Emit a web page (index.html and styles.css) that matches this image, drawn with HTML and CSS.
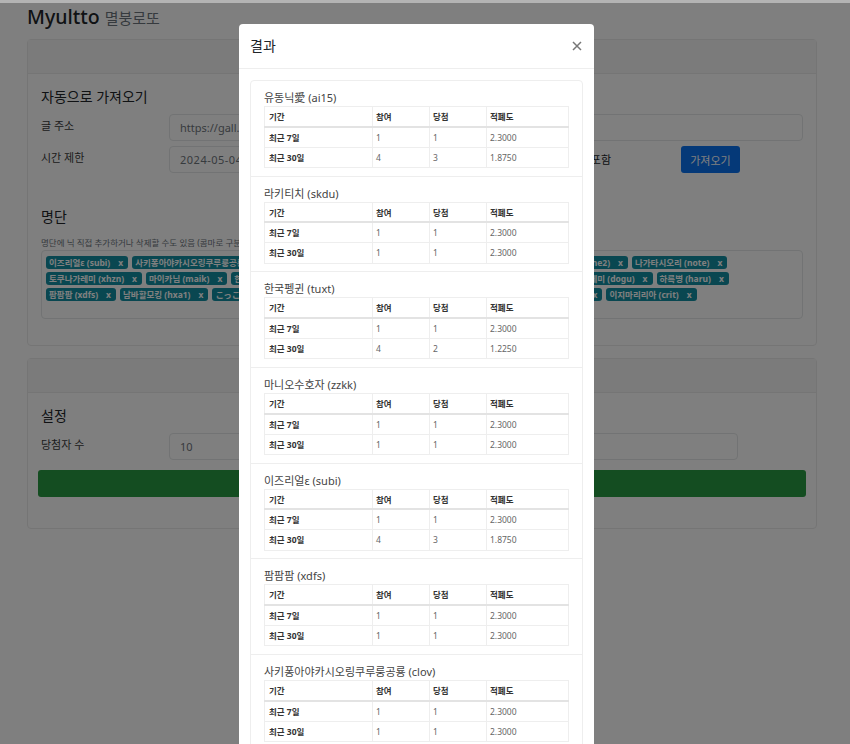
FILE: index.html
```html
<!DOCTYPE html>
<html lang="ko">
<head>
  <meta charset="UTF-8">
  <title>Myultto</title>
  <link rel="stylesheet" href="styles.css">
</head>
<body>
  <div class="page">
    <h1 class="title">Myultto <small>멸붕로또</small></h1>

    <section class="card">
      <div class="card-header"></div>
      <div class="card-body">
        <h5>자동으로 가져오기</h5>
        <div class="form-row">
          <label class="form-label">글 주소</label>
          <input class="form-control" value="https://gall.dcinside.com/mgallery/board/view/?id=pumpitup">
        </div>
        <div class="form-row">
          <label class="form-label">시간 제한</label>
          <input class="form-control date-input" value="2024-05-04">
          <span class="check-label">댓글 포함</span>
          <button class="btn btn-primary">가져오기</button>
        </div>

        <h5 class="list-title">명단</h5>
        <p class="help-text">명단에 닉 직접 추가하거나 삭제할 수도 있음 (콤마로 구분)</p>
        <div class="tag-box">
          <div class="tag-row">
            <span class="tag">이즈리얼ε (subi)<i>x</i></span>
            <span class="tag">사키퐁아야카시오링쿠루룽공룡 (clov)<i>x</i></span>
            <span class="tag">유동닉愛 (ai15)<i>x</i></span>
            <span class="tag">라키티치 (skdu)<i>x</i></span>
            <span class="tag">한국펭귄 (tuxt)<i>x</i></span>
            <span class="tag">마니오수호 (zhe2)<i>x</i></span>
            <span class="tag">나가타시오리 (note)<i>x</i></span>
          </div>
          <div class="tag-row">
            <span class="tag">토쿠나가레미 (xhzn)<i>x</i></span>
            <span class="tag">마이카님 (maik)<i>x</i></span>
            <span class="tag">한국펭귄 (tuxt)<i>x</i></span>
            <span class="tag">마니오수호자 (zzkk)<i>x</i></span>
            <span class="tag">라키티치 (skdu)<i>x</i></span>
            <span class="tag">팜팜팜 (xdfs)<i>x</i></span>
            <span class="tag">도구레미 (dogu)<i>x</i></span>
            <span class="tag">하륵병 (haru)<i>x</i></span>
          </div>
          <div class="tag-row">
            <span class="tag">팜팜팜 (xdfs)<i>x</i></span>
            <span class="tag">남바할모킹 (hxa1)<i>x</i></span>
            <span class="tag">こっこ (kkoo)<i>x</i></span>
            <span class="tag">치즈케이크 (chee)<i>x</i></span>
            <span class="tag">유동닉愛 (ai15)<i>x</i></span>
            <span class="tag">이즈리얼ε (subi)<i>x</i></span>
            <span class="tag">こっ (k)<i>x</i></span>
            <span class="tag">이지마리리아 (crit)<i>x</i></span>
          </div>
        </div>
      </div>
    </section>

    <section class="card">
      <div class="card-header"></div>
      <div class="card-body settings-body">
        <h5>설정</h5>
        <div class="form-row count-row">
          <label class="form-label">당첨자 수</label>
          <input class="form-control" value="10">
        </div>
        <button class="btn btn-success"></button>
      </div>
    </section>
  </div>

  <!-- 결과 모달 -->
  <div class="modal">
    <div class="modal-dialog">
      <div class="modal-header">
        <span class="modal-title">결과</span>
        <svg class="modal-close" width="10" height="10" viewBox="0 0 10 10"><path d="M1 1l8 8M9 1l-8 8"/></svg>
      </div>
      <div class="modal-body">
        <div class="result-list">
          <div class="result-item">
            <div class="result-name">유동닉愛 (ai15)</div>
            <table>
              <tr><th>기간</th><th>참여</th><th>당첨</th><th>적폐도</th></tr>
              <tr><th>최근 7일</th><td>1</td><td>1</td><td>2.3000</td></tr>
              <tr><th>최근 30일</th><td>4</td><td>3</td><td>1.8750</td></tr>
            </table>
          </div>
          <div class="result-item">
            <div class="result-name">라키티치 (skdu)</div>
            <table>
              <tr><th>기간</th><th>참여</th><th>당첨</th><th>적폐도</th></tr>
              <tr><th>최근 7일</th><td>1</td><td>1</td><td>2.3000</td></tr>
              <tr><th>최근 30일</th><td>1</td><td>1</td><td>2.3000</td></tr>
            </table>
          </div>
          <div class="result-item">
            <div class="result-name">한국펭귄 (tuxt)</div>
            <table>
              <tr><th>기간</th><th>참여</th><th>당첨</th><th>적폐도</th></tr>
              <tr><th>최근 7일</th><td>1</td><td>1</td><td>2.3000</td></tr>
              <tr><th>최근 30일</th><td>4</td><td>2</td><td>1.2250</td></tr>
            </table>
          </div>
          <div class="result-item">
            <div class="result-name">마니오수호자 (zzkk)</div>
            <table>
              <tr><th>기간</th><th>참여</th><th>당첨</th><th>적폐도</th></tr>
              <tr><th>최근 7일</th><td>1</td><td>1</td><td>2.3000</td></tr>
              <tr><th>최근 30일</th><td>1</td><td>1</td><td>2.3000</td></tr>
            </table>
          </div>
          <div class="result-item">
            <div class="result-name">이즈리얼ε (subi)</div>
            <table>
              <tr><th>기간</th><th>참여</th><th>당첨</th><th>적폐도</th></tr>
              <tr><th>최근 7일</th><td>1</td><td>1</td><td>2.3000</td></tr>
              <tr><th>최근 30일</th><td>4</td><td>3</td><td>1.8750</td></tr>
            </table>
          </div>
          <div class="result-item">
            <div class="result-name">팜팜팜 (xdfs)</div>
            <table>
              <tr><th>기간</th><th>참여</th><th>당첨</th><th>적폐도</th></tr>
              <tr><th>최근 7일</th><td>1</td><td>1</td><td>2.3000</td></tr>
              <tr><th>최근 30일</th><td>1</td><td>1</td><td>2.3000</td></tr>
            </table>
          </div>
          <div class="result-item">
            <div class="result-name">사키퐁아야카시오링쿠루룽공룡 (clov)</div>
            <table>
              <tr><th>기간</th><th>참여</th><th>당첨</th><th>적폐도</th></tr>
              <tr><th>최근 7일</th><td>1</td><td>1</td><td>2.3000</td></tr>
              <tr><th>최근 30일</th><td>1</td><td>1</td><td>2.3000</td></tr>
            </table>
          </div>
        </div>
      </div>
    </div>
  </div>
</body>
</html>
```

FILE: styles.css
```css
* {
  box-sizing: border-box;
}

html,
body {
  height: 100%;
}

body {
  margin: 0;
  overflow: hidden;
  background-color: #fff;
  color: #212529;
  font-family: "Noto Sans", "Noto Sans CJK KR", sans-serif;
  font-size: 11px;
  line-height: 1.4;
}

.page {
  padding: 0 33px 0 27px;
}

.title {
  margin: 0;
  height: 39px;
  padding-top: 3px;
  font-size: 19.5px;
  font-weight: 500;
  line-height: 28px;
}

.title small {
  color: #6c757d;
  font-size: 15px;
  font-weight: 400;
}

/* 카드 */
.card {
  margin-bottom: 12px;
  border: 1px solid #eaeaea;
  border-radius: 4px;
}

.card-header {
  height: 34px;
  border-bottom: 1px solid #eaeaea;
  background-color: #f7f7f7;
}

.card-body {
  padding: 13px 13px 26px;
}

.settings-body {
  padding-bottom: 31px;
}

h5 {
  margin: 0 0 7px;
  font-size: 14px;
  font-weight: 400;
  line-height: 20px;
}

.form-row {
  display: flex;
  align-items: flex-start;
  height: 27px;
  margin-bottom: 5px;
}

.form-label {
  flex: 0 0 128px;
  color: #3a3a3a;
  line-height: 23px;
}

.form-control {
  flex: 1;
  min-width: 0;
  height: 27px;
  padding: 0 10px;
  border: 1px solid #e4e6e8;
  border-radius: 4px;
  background-color: #fff;
  color: #6f767d;
  font-family: inherit;
  font-size: 11px;
}

.date-input {
  flex: 0 0 280px;
  letter-spacing: 0.5px;
}

.check-label {
  flex: 0 0 162px;
  line-height: 27px;
  text-align: right;
}

.btn {
  border: 0;
  border-radius: 3px;
  font-family: inherit;
  font-size: 11px;
}

.btn-primary {
  width: 59px;
  height: 27px;
  margin-left: 70px;
  background-color: #0a72f0;
  color: #fff;
}

.btn-success {
  display: block;
  width: 768px;
  height: 27px;
  margin: 10px 0 0 -3px;
  background-color: #289a42;
}

.list-title {
  margin: 34px 0 10px;
}

.help-text {
  margin: 0;
  height: 13px;
  color: #6c757d;
  font-size: 8.5px;
  line-height: 12px;
  white-space: nowrap;
  overflow: hidden;
}

/* 명단 태그 */
.tag-box {
  height: 69px;
  padding: 5px 4px;
  border: 1px solid #e4e6e8;
  border-radius: 4px;
}

.tag-row {
  display: flex;
  gap: 4px;
  margin-bottom: 3px;
}

.tag {
  height: 13px;
  padding: 0 5px 0 3px;
  border-radius: 3px;
  background-color: #128fa3;
  color: #fff;
  font-size: 8.5px;
  font-weight: 700;
  line-height: 13px;
  white-space: nowrap;
}

.tag i {
  margin-left: 8px;
  font-style: normal;
}

.count-row {
  margin-right: 65px;
  margin-bottom: 0;
}

/* 모달 */
.modal {
  position: fixed;
  top: 0;
  left: 0;
  right: 0;
  bottom: 0;
  padding-right: 17px;
  overflow: hidden;
  border-top: 3px solid #b4b4b4;
  background-color: rgba(0, 0, 0, 0.5);
  background-clip: padding-box;
}

.modal-dialog {
  width: 355px;
  margin: 21px auto 0;
  border-radius: 4px;
  background-color: #fff;
}

.modal-header {
  display: flex;
  justify-content: space-between;
  align-items: center;
  height: 45px;
  padding: 0 12px 0 11px;
  border-bottom: 1px solid #eee;
}

.modal-title {
  font-size: 14px;
}

.modal-close {
  fill: none;
  stroke: #777;
  stroke-width: 1.5;
}

.modal-body {
  padding: 11px;
}

.result-list {
  border: 1px solid #eee;
  border-radius: 4px;
}

.result-item {
  height: 95.67px;
  padding: 10px 13px 0;
  border-bottom: 1px solid #eee;
}

.result-name {
  height: 15px;
  color: #444;
  font-size: 11px;
  line-height: 14px;
  white-space: nowrap;
}

table {
  width: 304px;
  table-layout: fixed;
  border-collapse: collapse;
  font-size: 8.5px;
}

th,
td {
  height: 20.3px;
  padding: 1px 3px 0;
  border: 1px solid #eee;
  text-align: left;
  line-height: 12px;
}

td {
  color: #666;
}

th {
  width: 57px;
  color: #333;
}

tr:first-child th {
  border-bottom: 2px solid #e3e3e3;
}

tr th:first-child {
  width: 108px;
  padding-left: 4px;
}

tr th:last-child {
  width: 82px;
}
```
